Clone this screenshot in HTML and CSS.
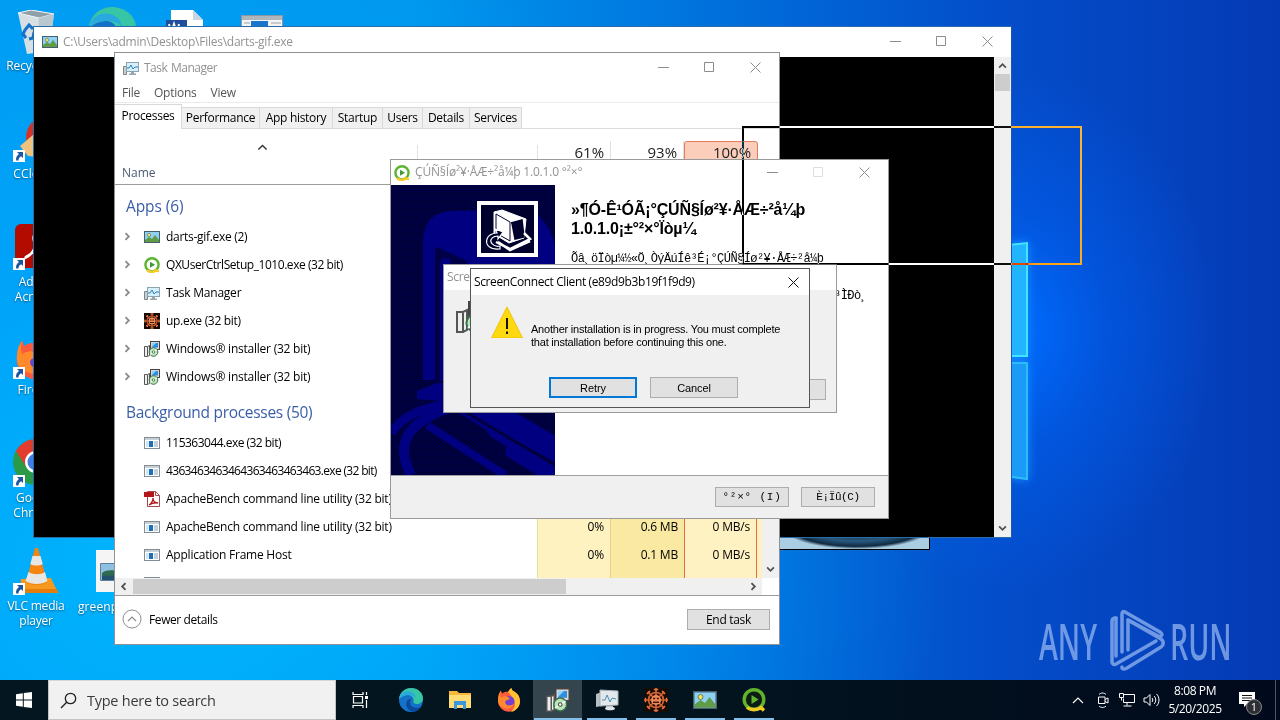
FILE: index.html
```html
<!DOCTYPE html>
<html lang="en">
<head>
    <meta charset="UTF-8">
    <meta name="viewport" content="width=device-width, initial-scale=1.0">
    <title>Desktop</title>
    <link rel="stylesheet" href="styles.css">
</head>
<body>
    <!-- Shared icons -->
    <svg class="defs" width="0" height="0">
        <symbol id="i-picture" viewBox="0 0 16 12">
            <rect x=".5" y=".5" width="15" height="11" fill="#8fd0f5" stroke="#45606c"/>
            <path d="M1 11V9l4-3 3 2 3-4 4 5v2z" fill="#5f9c45"/>
            <circle cx="5" cy="4" r="1.7" fill="#f2df5a" stroke="#5b7a50" stroke-width=".6"/>
        </symbol>
        <symbol id="i-qx" viewBox="0 0 16 16">
            <circle cx="8" cy="7.8" r="6.6" fill="#fff" stroke="#5cb531" stroke-width="2.4"/>
            <path d="M3 13.2a6.6 6.6 0 0 0 9 0l3 1.3" fill="none" stroke="#f5c927" stroke-width="2.4"/>
            <path d="M6 4.8v6l5-3z" fill="#3f9a35"/>
        </symbol>
        <symbol id="i-taskmgr" viewBox="0 0 16 16">
            <path d="M.5 6.500h3v8h-3z" fill="#c9ced2" stroke="#7d868c"/>
            <rect x="3.500" y="2.500" width="12" height="9" fill="#d5effc" stroke="#8ba3b1"/>
            <path d="M4 8h2l2-3 2 4 2-2h3" fill="none" stroke="#2f7fb5"/>
            <path d="M8 12h3v1.500h2V15H6v-1.500h2z" fill="#9aa6ae"/>
        </symbol>
        <symbol id="i-up" viewBox="0 0 16 16">
            <rect width="16" height="16" fill="#170b06"/>
            <g stroke="#d9622e" stroke-width="1.100" fill="none">
                <path d="M8 0v16M0 8h16M2.500 2.500l11 11M13.500 2.500l-11 11"/>
                <circle cx="8" cy="8" r="5"/>
            </g>
            <circle cx="8" cy="8" r="3.400" fill="#e98b58"/>
            <path d="M6 7h1.500M8.500 7H10M6 9.500h4" stroke="#4a1708"/>
            <path d="M6.500 1h3M6.500 15h3M1 6.500v3M15 6.500v3M2 4l2-2M12 2l2 2M2 12l2 2M12 14l2-2" stroke="#e27a45"/>
        </symbol>
        <symbol id="i-installer" viewBox="0 0 16 16">
            <rect x="6.500" y=".5" width="9" height="8" fill="#d6d6d6" stroke="#444"/>
            <rect x="8" y="2" width="6" height="4.500" fill="#2e8ee0"/>
            <path d="M8 6l4-4H8z" fill="#8fd2fb"/>
            <path d="M.5 5.500h3l2-1v10l-2 1h-3z" fill="#eee" stroke="#555"/>
            <path d="M3.500 6v9" stroke="#555"/>
            <circle cx="9.500" cy="11" r="4.300" fill="#b9e8b4" stroke="#3d6b53"/>
            <path d="M9.500 11L13 8.700M9.500 11L6 13.500" stroke="#fff"/>
            <circle cx="9.500" cy="11" r="1.200" fill="#fff" stroke="#444" stroke-width=".7"/>
        </symbol>
        <symbol id="i-exe" viewBox="0 0 16 12">
            <rect x=".5" y=".5" width="15" height="11" fill="#fff" stroke="#848c94"/>
            <path d="M1 1h14v2H1z" fill="#c6d0d8"/>
            <path d="M2 4h2.500v6H2z" fill="#cfe6f4"/>
            <path d="M5 4h4v6H5z" fill="#1c6fb8"/>
            <path d="M10 5h4M10 7h4M10 9h4" stroke="#8aa4b8"/>
        </symbol>
        <symbol id="i-pdf" viewBox="0 0 16 16">
            <path d="M3.500.5h8l4 4v11h-12z" fill="#fff" stroke="#a5494d"/>
            <path d="M11.500.5v4h4" fill="none" stroke="#a5494d"/>
            <path d="M0 1h10v5H0z" fill="#b3151b"/>
            <path d="M5 14c3-2 4-5 4-7 0 3 2 5 5 5-3-.5-6 0-9 2z" fill="none" stroke="#b3151b" stroke-width="1.300"/>
        </symbol>
        <symbol id="i-min" viewBox="0 0 11 11"><path d="M0 5.500h11" stroke="currentColor"/></symbol>
        <symbol id="i-max" viewBox="0 0 11 11"><path d="M.5.5h9v9H.5z" fill="none" stroke="currentColor"/></symbol>
        <symbol id="i-close" viewBox="0 0 11 11"><path d="M.5.5l10 10M10.500.5l-10 10" stroke="currentColor"/></symbol>
        <symbol id="i-chev" viewBox="0 0 8 8"><path d="M1 5.800l3-3 3 3" fill="none" stroke="currentColor" stroke-width="1.600"/></symbol>
        <symbol id="i-chev-thin" viewBox="0 0 8 8"><path d="M1 5.500l3-3 3 3" fill="none" stroke="currentColor"/></symbol>
        <symbol id="i-shortcut" viewBox="0 0 12 12">
            <path d="M0 0h12v12H0z" fill="#fff"/>
            <path d="M4 2h6v6L8 6.200C6 7.500 5.500 8.500 5.500 10.500H3.200C2.500 7.500 4 5.500 6 4z" fill="#1d559e"/>
        </symbol>
        <symbol id="i-edge" viewBox="0 0 24 24">
            <circle cx="12" cy="12" r="12" fill="#1373ca"/>
            <path d="M0 11C1 4 6 0 12 0c7 0 12 5 12 10 0 4-3 6-6.500 6-2 0-3.500-1-3-2.500C15.500 10 12.500 7 9 7c-4 0-7 2-9 4z" fill="#37c6a5"/>
            <path d="M0 11C2 4 7 2.500 11 3.500c4 1 6 4 6 7-1-2.500-4-3.500-7-3.500-4 0-8 1-10 4z" fill="#2aa9e0"/>
            <path d="M22 18.500c-3 2-8 1.500-10-1-1.500-2-1-5 .5-6.500-4-.5-6 3-5 7 1 3.500 4 5.500 7 5.500 3 0 6-2 7.500-5z" fill="#0c4a9c"/>
        </symbol>
        <symbol id="i-firefox" viewBox="0 0 24 24">
            <path d="M1 13C1 8 2 5 4 2.500l1 3C7 4 9 3.500 11 4c1-2 2-3 3.500-4 0 2 1.500 3 3.500 4 3 2 5 5 5 9.500A11 10.500 0 0 1 1 13z" fill="#ff5a3c"/>
            <path d="M11 4c1-2 2-3 3.500-4 0 2 1.500 3 3.500 4 3 2 5 5 5 9.500 0 5-4 9.500-9 10.500 4-4 5-9 2-13-1-3-3-5-5-7z" fill="#ffc233"/>
            <circle cx="12" cy="13.500" r="5.500" fill="#7540cf"/>
            <path d="M4 2.500C3 6 3 8 4 10c2-2 5-2 7-1l2 2-4 1.500c-2 2 0 5 3 5 2 0 4-1 5-2-1 4-5 5.500-8 5C4 19.500 1 16 1 13 1 8 2 5 4 2.500z" fill="#ff8a2c"/>
        </symbol>
    </svg>

    <div class="desktop">
        <svg class="wall-logo" viewBox="0 0 40 250">
            <path d="M0 7l28-3v113H0z" fill="#22b4ff" stroke="#41e4fb" stroke-width="2"/>
            <path d="M0 124h28v116l-28-4z" fill="#1a9bf8" stroke="#2cbdf9" stroke-width="2"/>
        </svg>

        <!-- Desktop shortcuts -->
        <div class="shortcut recycle">
            <svg width="40" height="44" viewBox="0 0 40 44">
                <path d="M1 3l13-3 23 4-5 37-22 3z" fill="#d5dfe4"/>
                <path d="M1 3l13-3 23 4-15 4z" fill="#919fa7" stroke="#f0f6f8"/>
                <path d="M22 8l15-4-5 37-12 2z" fill="#b9c7ce"/>
                <g fill="none" stroke="#1672c8" stroke-width="3"><path d="M8 20l4-5 4 4M17 22l-1 6-4 1M9 28l-3-4 2-4"/></g>
            </svg>
            <span>Recycle Bin</span>
        </div>
        <div class="shortcut ccleaner">
            <svg width="44" height="50" viewBox="0 0 44 50">
                <circle cx="30" cy="25" r="21" fill="#d3322b"/><circle cx="30" cy="25" r="12" fill="#4c8ed0"/>
                <path d="M3 34l14-12 14 8v16l-20-2z" fill="#efc37e"/>
            </svg>
            <svg class="arrow"><use href="#i-shortcut"/></svg>
            <span>CCleaner</span>
        </div>
        <div class="shortcut acrobat">
            <svg width="44" height="44" viewBox="0 0 44 44">
                <rect width="44" height="44" rx="6" fill="#b30b00"/>
                <path d="M10 34c8-3 13-14 11-22-2-3-3 1-2 5 2 6 8 10 14 10-6-2-16 0-23 7z" fill="none" stroke="#fff" stroke-width="2.500"/>
            </svg>
            <svg class="arrow"><use href="#i-shortcut"/></svg>
            <span>Adobe<br>Acrobat</span>
        </div>
        <div class="shortcut firefox">
            <svg width="44" height="44"><use href="#i-firefox"/></svg>
            <svg class="arrow"><use href="#i-shortcut"/></svg>
            <span>Firefox</span>
        </div>
        <div class="shortcut chrome">
            <svg width="46" height="46" viewBox="0 0 46 46">
                <circle cx="23" cy="23" r="23" fill="#2b9a48"/>
                <path d="M3 12C7 5 14 0 23 0s16 5 20 12H23z" fill="#e33b2e"/><path d="M3 12l11 17 9-17z" fill="#e33b2e"/>
                <circle cx="23" cy="23" r="11" fill="#fff"/><circle cx="23" cy="23" r="8.500" fill="#3f7ee8"/>
            </svg>
            <svg class="arrow"><use href="#i-shortcut"/></svg>
            <span>Google<br>Chrome</span>
        </div>
        <div class="shortcut vlc">
            <svg width="44" height="48" viewBox="0 0 44 48">
                <path d="M7 32l30-1 7 15H6z" fill="#f59a1f"/>
                <path d="M6 42h37l1 4H4z" fill="#e87c0c"/>
                <path d="M21 1h3l9 34c-5 4-16 4-21 0z" fill="#f58410"/>
                <path d="M18.500 9h8l2.300 8c-4 2-9 2-12.500 0zM14.500 25c5 3 12 3 16.500 0l2.500 9c-6 4-16 4-22 0z" fill="#e6e6e4"/>
            </svg>
            <svg class="arrow"><use href="#i-shortcut"/></svg>
            <span>VLC media<br>player</span>
        </div>
        <div class="shortcut edge"><svg width="48" height="48"><use href="#i-edge"/></svg></div>
        <div class="shortcut worddoc">
            <svg width="38" height="40" viewBox="0 0 38 40">
                <path d="M5 1h22l10 10v28H5z" fill="#fff"/><path d="M27 1l10 10H27z" fill="#c9d6e2"/>
                <path d="M0 11h21v20H0z" fill="#1f4f9c"/><path d="M3 15l2 9 3-9 3 9 2-9" fill="none" stroke="#fff" stroke-width="2"/>
            </svg>
        </div>
        <div class="shortcut exefile">
            <svg width="42" height="30" viewBox="0 0 42 30">
                <path d="M.5.5h41v29H.5z" fill="#f4f4f4" stroke="#8e979f"/><path d="M1 1h40v4H1z" fill="#aeb6bc"/>
                <path d="M10 6h17v20H10z" fill="#1976cc"/><path d="M30 8h10M30 12h10M3 8h6" stroke="#9aa3aa"/>
            </svg>
        </div>
        <div class="shortcut greenp">
            <svg width="42" height="42" viewBox="0 0 42 42">
                <path d="M0 0h42v42H0z" fill="#f5f5f5"/><path d="M4.500 13.500h34v17h-34z" fill="#8fc0e4" stroke="#5d7f9c"/>
                <path d="M6 23c6-5 14-2 30 0v6H6z" fill="#2f6a4e"/><path d="M6 26c6-1 10 0 30 0v4H6z" fill="#26506f"/>
            </svg>
            <span>greenp...</span>
        </div>

        <div class="peek"></div>

        <!-- Console window -->
        <div class="window console">
            <div class="titlebar">
                <svg class="pic"><use href="#i-picture"/></svg>
                <span class="title">C:\Users\admin\Desktop\Files\darts-gif.exe</span>
                <div class="controls">
                    <svg><use href="#i-min"/></svg><svg><use href="#i-max"/></svg><svg><use href="#i-close"/></svg>
                </div>
            </div>
            <div class="console-body">
                <div class="vscroll">
                    <svg><use href="#i-chev"/></svg>
                    <div class="thumb"></div>
                    <svg class="down"><use href="#i-chev"/></svg>
                </div>
            </div>
        </div>

        <!-- Task Manager -->
        <div class="window taskmgr">
            <div class="titlebar">
                <svg class="sq"><use href="#i-taskmgr"/></svg>
                <span class="title">Task Manager</span>
                <div class="controls">
                    <svg><use href="#i-min"/></svg><svg><use href="#i-max"/></svg><svg><use href="#i-close"/></svg>
                </div>
            </div>
            <div class="menu"><span>File</span><span>Options</span><span>View</span></div>
            <div class="tabs">
                <span class="tab active">Processes</span>
                <span class="tab t-perf">Performance</span>
                <span class="tab t-hist">App history</span>
                <span class="tab t-start">Startup</span>
                <span class="tab t-users">Users</span>
                <span class="tab t-det">Details</span>
                <span class="tab t-serv">Services</span>
            </div>
            <div class="thead">
                <div class="th-name"><svg><use href="#i-chev-thin"/></svg><span>Name</span></div>
                <div class="th"></div>
                <div class="th">61%</div>
                <div class="th">93%</div>
                <div class="th hot">100%</div>
            </div>
            <div class="table">
                <div class="list">
                    <h2>Apps (6)</h2>
                    <div class="row"><svg class="exp"><use href="#i-chev"/></svg><svg class="ico"><use href="#i-picture"/></svg><span>darts-gif.exe (2)</span></div>
                    <div class="row"><svg class="exp"><use href="#i-chev"/></svg><svg class="ico"><use href="#i-qx"/></svg><span class="tight">QXUserCtrlSetup_1010.exe (32 bit)</span></div>
                    <div class="row"><svg class="exp"><use href="#i-chev"/></svg><svg class="ico"><use href="#i-taskmgr"/></svg><span class="wide">Task Manager</span></div>
                    <div class="row"><svg class="exp"><use href="#i-chev"/></svg><svg class="ico"><use href="#i-up"/></svg><span>up.exe (32 bit)</span></div>
                    <div class="row"><svg class="exp"><use href="#i-chev"/></svg><svg class="ico"><use href="#i-installer"/></svg><span class="wide">Windows® installer (32 bit)</span></div>
                    <div class="row"><svg class="exp"><use href="#i-chev"/></svg><svg class="ico"><use href="#i-installer"/></svg><span class="wide">Windows® installer (32 bit)</span></div>
                    <h2>Background processes (50)</h2>
                    <div class="row sub"><svg class="ico"><use href="#i-exe"/></svg><span class="num">115363044.exe (32 bit)</span></div>
                    <div class="row sub"><svg class="ico"><use href="#i-exe"/></svg><span class="digits">4363463463464363463463463.exe (32 bit)</span></div>
                    <div class="row sub"><svg class="ico"><use href="#i-pdf"/></svg><span class="wide">ApacheBench command line utility (32 bit)</span></div>
                    <div class="row sub"><svg class="ico"><use href="#i-exe"/></svg><span class="wide">ApacheBench command line utility (32 bit)</span></div>
                    <div class="row sub"><svg class="ico"><use href="#i-exe"/></svg><span class="wide">Application Frame Host</span></div>
                    <div class="row sub"><svg class="ico"><use href="#i-exe"/></svg></div>
                </div>
                <div class="col cpu"><span>0%</span><span>0%</span></div>
                <div class="col mem"><span>0.6 MB</span><span>0.1 MB</span></div>
                <div class="col disk"><span>0 MB/s</span><span>0 MB/s</span></div>
                <div class="col rest"></div>
                <div class="vscroll"><svg class="down"><use href="#i-chev"/></svg></div>
            </div>
            <div class="hscroll">
                <svg class="left"><use href="#i-chev"/></svg>
                <div class="thumb"></div>
                <svg class="right"><use href="#i-chev"/></svg>
            </div>
            <div class="foot">
                <svg viewBox="0 0 20 20"><circle cx="10" cy="10" r="9" fill="none" stroke="#8f8f8f"/><path d="M6 12l4-4 4 4" fill="none" stroke="#8f8f8f" stroke-width="1.200"/></svg>
                <span>Fewer details</span>
                <div class="btn end">End task</div>
            </div>
        </div>

        <!-- Setup wizard -->
        <div class="window wizard">
            <div class="titlebar">
                <svg class="sq"><use href="#i-qx"/></svg>
                <span class="title">ÇÚÑ§Íø²¥·ÅÆ÷²å¼þ 1.0.1.0 °²×°</span>
                <div class="controls">
                    <svg><use href="#i-min"/></svg><svg class="off"><use href="#i-max"/></svg><svg><use href="#i-close"/></svg>
                </div>
            </div>
            <div class="wiz-body">
                <svg class="banner" viewBox="0 0 164 290">
                    <defs>
                        <pattern id="dots" width="4" height="4" patternUnits="userSpaceOnUse">
                            <path d="M0 0h4v4H0z" fill="#000038"/><path d="M0 0h1v1H0zM2 2h1v1H2z" fill="#00006c"/>
                        </pattern>
                    </defs>
                    <path d="M0 0h164v290H0z" fill="url(#dots)"/>
                    <path d="M32 60c0-22 8-32 28-34l80-2c12 8 24 26 24 40v60H60V72L44 62v133H32z" fill="#000080"/>
                    <path d="M46 62l30 14v120H46z" fill="#000048"/>
                    <path d="M49 80c0-6 4-8 10-6v122H49z" fill="#000080"/>
                    <path d="M26 206l20-8h30v20l-50-4z" fill="#000080"/>
                    <g fill="none" stroke="#000080" stroke-width="9">
                        <path d="M0 248c14-20 34-25 60-30"/>
                        <path d="M20 290C2 256 20 236 58 223" stroke-width="10"/>
                        <path d="M36 240l78 50" stroke-width="8"/>
                        <path d="M60 218l104 64"/>
                    </g>
                    <path d="M78 222h42l44 26v42l-64-38z" fill="#000080"/>
                    <path d="M66 222l98 58M118 222l46 27M116 252l48 27" stroke="#000040" stroke-width="3"/>
                    <path d="M116 256l10 4 38 22v8h-18l-32-20z" fill="#000080"/>
                    <path d="M86 16h61v56H86z" fill="#fff"/>
                    <path d="M90 20h53v48H90z" fill="#00002c"/>
                    <path d="M103 27l8-2 24 9-2 19-15 5-15-9z" fill="#fff" stroke="#fff"/>
                    <path d="M120 38l11-3 2 17-9 2-3-16" fill="#00002c" stroke="#00002c" stroke-width="1.500"/>
                    <path d="M105 29v19l14 8V37z" fill="#fff" stroke="#00002c"/>
                    <path d="M133 48l6 6-20 10-14-7M107 57l12 8 20-9" fill="none" stroke="#fff" stroke-width="2.500"/>
                    <path d="M109 64c-10 1-15-4-13-10 1-4 6-6 10-6l-2-4 8 3-5 7v-3c-5 0-8 3-7 6 1 3 5 5 9 4z" fill="#00002c" stroke="#fff" stroke-width="1.200"/>
                </svg>
                <div class="wiz-text">
                    <h1>»¶Ó-Ê¹ÓÃ¡°ÇÚÑ§Íø²¥·ÅÆ÷²å¼þ<br>1.0.1.0¡±°²×°Ïòµ¼</h1>
                    <p>Õâ¸öÏòµ¼½«Ö¸ÒýÄúÍê³É¡°ÇÚÑ§Íø²¥·ÅÆ÷²å¼þ</p>
                    <p class="second">³ÌÐò¸</p>
                </div>
            </div>
            <div class="wiz-foot">
                <div class="btn install">°²×°&nbsp;(I)</div>
                <div class="btn">È¡Ïû(C)</div>
            </div>
        </div>

        <!-- Installer progress dialog, behind the message box -->
        <div class="window progress">
            <div class="titlebar"><span class="title">Scre</span></div>
            <div class="progress-body">
                <svg><use href="#i-installer"/></svg>
                <div class="btn"></div>
            </div>
        </div>

        <!-- Message box -->
        <div class="window msgbox">
            <div class="titlebar">
                <span class="title">ScreenConnect Client (e89d9b3b19f1f9d9)</span>
                <div class="controls"><svg><use href="#i-close"/></svg></div>
            </div>
            <div class="msg-body">
                <svg viewBox="0 0 32 32">
                    <path d="M16 1l15.500 31H.5z" fill="#ffd90f" stroke="#efc200" stroke-linejoin="round"/>
                    <path d="M16 12v11M16 25.500v2.500" stroke="#111" stroke-width="2"/>
                </svg>
                <p>Another installation is in progress. You must complete<br>that installation before continuing this one.</p>
            </div>
            <div class="msg-foot"><div class="btn default">Retry</div><div class="btn">Cancel</div></div>
        </div>

        <!-- Outline drawn while a window is dragged -->
        <div class="drag-outline"></div>

        <div class="watermark">
            <span class="any">ANY</span>
            <svg viewBox="0 0 56 62">
                <g fill="none" stroke="#9cbdf3" stroke-width="3.500" stroke-linejoin="round" stroke-linecap="round">
                    <path d="M7 8c-3 0-4 1-4 3v41c0 2 2 3 4 2l40-23"/>
                    <path d="M7 8v38M13 42V4c0-2 1-3 3-2l35 20c3 2 2 4 0 5L19 10"/>
                    <path d="M13 57v1c1 2 3 1 5 0l34-21c3-2 3-6 0-8L19 10v30"/>
                </g>
            </svg>
            <span class="run">RUN</span>
        </div>
    </div>

    <!-- Taskbar -->
    <div class="taskbar">
        <div class="start"><svg width="16" height="16" viewBox="0 0 16 16"><path d="M0 2.200L6.800 1.200V7.500H0zM7.800 1L16 0v7.500H7.800zM0 8.500h6.800v6.300L0 13.800zM7.800 8.500H16V16l-8.200-1.100z" fill="#fff"/></svg></div>
        <div class="search">
            <svg width="17" height="17" viewBox="0 0 17 17"><circle cx="10.500" cy="6.500" r="5.200" fill="none" stroke="#222" stroke-width="1.300"/><path d="M6.700 10.300L1 16" stroke="#222" stroke-width="1.400"/></svg>
            <span>Type here to search</span>
        </div>
        <div class="task"><svg width="17" height="16" viewBox="0 0 17 16"><path d="M1 0v2.500h10V0M1 16v-2.500h10V16M1.500 4.500h9v6.500h-9zM14.500 0v3M14.500 8v8" fill="none" stroke="#fff" stroke-width="1.200"/><path d="M13 4h3v3h-3z" fill="#fff"/></svg></div>
        <div class="task"><svg width="24" height="24"><use href="#i-edge"/></svg></div>
        <div class="task">
            <svg width="22" height="20" viewBox="0 0 22 20"><path d="M0 1h8l2 2h12v15H0z" fill="#f5b83a"/><path d="M0 5h22v13H0z" fill="#ffdc74"/><path d="M5 11h12v8h-3v-4H8v4H5z" fill="#3d98da"/></svg>
        </div>
        <div class="task"><svg width="24" height="24"><use href="#i-firefox"/></svg></div>
        <div class="task open current"><svg width="24" height="24"><use href="#i-installer"/></svg></div>
        <div class="task open">
            <svg width="24" height="22" viewBox="0 0 24 22"><path d="M1 5l6-2v14l-6 1z" fill="#b7bec4"/><path d="M5 1l18 1v14L5 17z" fill="#e3e8eb" stroke="#a5afb6"/><path d="M7 11h3l2-5 3 7 2-4 4 1" fill="none" stroke="#4a8eb8"/><path d="M11 17h7v2h-7z" fill="#b9c2c8"/><ellipse cx="15" cy="19.500" rx="5" ry="1.800" fill="#dfe5e8"/></svg>
        </div>
        <div class="task open"><svg width="24" height="24"><use href="#i-up"/></svg></div>
        <div class="task open"><svg width="24" height="18"><use href="#i-picture"/></svg></div>
        <div class="task open">
            <svg width="24" height="24" viewBox="0 0 24 24"><circle cx="12" cy="11.500" r="9.800" fill="#0b1d14" stroke="#62b32c" stroke-width="3.400"/><path d="M5 19.500c4 3 10 3 14 0l3 3" fill="none" stroke="#f0cb20" stroke-width="3.400"/><path d="M9.500 7v9l7-4.500z" fill="#62b32c"/></svg>
        </div>
        <div class="tray">
            <svg width="12" height="8" viewBox="0 0 12 8"><path d="M1 7l5-5 5 5" fill="none" stroke="#fff" stroke-width="1.200"/></svg>
            <svg width="12" height="16" viewBox="0 0 12 16"><path d="M1.500 5h6.500v6.500H1.500zM8 7.500l3-1.500v5L8 9.500M2 2.500c2-2 5-2 7 0M2 14c2 2 5 2 7 0" fill="none" stroke="#fff"/></svg>
            <svg width="16" height="14" viewBox="0 0 16 14"><path d="M5 1.500h10.500v8H4.500v-4M8 9.500v3M4.500 13h8M.5.5h4v4h-4zM2.500 4.500v3" fill="none" stroke="#fff"/></svg>
            <svg width="17" height="14" viewBox="0 0 17 14"><path d="M1 5h2.500L7 1.500v11L3.500 9H1zM9 5c1 1 1 3 0 4M11 3c2.300 2 2.300 6 0 8M13.500 1c3.300 3 3.300 9 0 12" fill="none" stroke="#fff"/></svg>
        </div>
        <div class="clock"><span>8:08 PM</span><span>5/20/2025</span></div>
        <div class="notify">
            <svg width="16" height="16" viewBox="0 0 16 16"><path d="M0 0h16v12H8l-3 3v-3H0z" fill="#fff"/><path d="M3 3.500h10M3 6h10M3 8.500h10" stroke="#111"/></svg>
            <span class="badge">1</span>
        </div>
        <div class="peek-btn"></div>
    </div>
</body>
</html>
```
FILE: styles.css
```css
* { box-sizing: border-box; }
body { margin: 0; width: 1280px; height: 720px; overflow: hidden; font-family: "Open Sans", "Noto Sans", sans-serif; font-size: 12px; color: #000; }
svg { display: block; flex: none; }
.defs { position: absolute; }

/* Wallpaper */
.desktop {
    position: relative; width: 1280px; height: 680px; overflow: hidden;
    background:
        radial-gradient(ellipse 210px 260px at 1010px 330px, #006cff 0%, rgba(0, 98, 245, .5) 45%, rgba(0, 90, 230, 0) 100%),
        radial-gradient(ellipse 760px 620px at 180px 560px, rgba(0, 184, 255, .9) 0%, rgba(0, 170, 255, .5) 50%, rgba(0, 160, 255, 0) 100%),
        linear-gradient(90deg, #009cf2 0%, #0098ee 32%, #0068d8 61%, #044dca 78%, #053ab4 100%);
}
.wall-logo { position: absolute; left: 999px; top: 239px; width: 40px; height: 250px; filter: drop-shadow(0 0 5px #1590ff); }

/* Shortcuts */
.shortcut { position: absolute; width: 74px; display: flex; flex-direction: column; align-items: center; color: #fff; text-align: center; line-height: 15px; letter-spacing: .1px; text-shadow: 0 1px 2px rgba(0, 0, 0, .5); }
.shortcut .arrow { position: absolute; left: 13px; width: 12px; height: 12px; }
.shortcut span { margin-top: 6px; }
.recycle { left: 0; top: 10px; }
.recycle span { margin-top: 4px; letter-spacing: -.1px; }
.ccleaner { left: 2px; top: 112px; }
.ccleaner .arrow { left: 11px; top: 38px; }
.ccleaner span { margin-top: 4px; }
.acrobat { left: 0; top: 224px; }
.acrobat .arrow { top: 34px; }
.acrobat span { margin-top: 6px; }
.firefox { left: 0; top: 336px; }
.firefox .arrow { top: 31px; }
.firefox span { margin-top: 2px; }
.chrome { left: -1px; top: 439px; }
.chrome .arrow { top: 36px; left: 14px; }
.chrome span { margin-top: 5px; }
.vlc { left: -1px; top: 547px; }
.vlc .arrow { left: 14px; top: 36px; }
.vlc span { margin-top: 3px; white-space: nowrap; letter-spacing: -.2px; }
.shortcut.edge { left: 75px; top: 7px; }
.worddoc { left: 148px; top: 9px; }
.exefile { left: 225px; top: 15px; }
.greenp { left: 78px; top: 550px; align-items: flex-start; }
.greenp svg { margin-left: 18px; }
.greenp span { margin-top: 7px; }
.peek { position: absolute; left: 760px; top: 520px; width: 170px; height: 30px; border: 1px solid #000; background: radial-gradient(ellipse 75px 22px at 96px 6px, #0d1d2c 0%, #28587e 65%, #102a42 88%, #a9cde2 100%); }

/* Windows */
.window { position: absolute; display: flex; flex-direction: column; background: #fff; border: 1px solid #9a9a9a; }
.titlebar { display: flex; align-items: center; flex: none; color: #929292; background: #fff; white-space: nowrap; }
.title { position: relative; top: -1px; }
.controls { display: flex; gap: 35px; margin-left: auto; }
.controls svg { width: 11px; height: 11px; color: #8c8c8c; }
.controls .off { color: #dedede; }
.sq { width: 16px; height: 16px; }
.btn { display: flex; align-items: center; justify-content: center; background: #e1e1e1; border: 1px solid #adadad; }
.vscroll { width: 17px; background: #f0f0f0; display: flex; flex-direction: column; align-items: center; color: #505050; }
.vscroll svg { width: 9px; height: 9px; }
.down { transform: rotate(180deg); margin-top: auto; }

.console { left: 33px; top: 26px; width: 979px; height: 512px; border-color: #2b6ca8; border-right-color: #1b58a8; }
.console .titlebar { height: 30px; padding: 0 18px 1px 8px; }
.console .title { top: 0; margin-left: 5px; letter-spacing: -.25px; }
.pic { width: 16px; height: 12px; }
.console-body { flex: 1; background: #000; display: flex; justify-content: flex-end; }
.console-body .vscroll { padding: 4px 0; }
.console-body .thumb { width: 15px; height: 17px; margin-top: 4px; background: #cdcdcd; }

.taskmgr { left: 114px; top: 52px; width: 666px; height: 593px; border-color: #8d9297; }
.taskmgr .titlebar { height: 30px; padding: 0 18px 1px 8px; }
.taskmgr .title { top: 0; margin-left: 5px; letter-spacing: -.5px; word-spacing: 1px; }
.menu { height: 20px; flex: none; display: flex; gap: 14px; padding: 1px 7px 0; line-height: 18px; letter-spacing: -.25px; color: #555; border-bottom: 1px solid #ececec; }
.tabs { height: 26px; flex: none; display: flex; align-items: flex-end; background: linear-gradient(#dcdcdc, #dcdcdc) bottom / 100% 1px no-repeat; letter-spacing: -.3px; }
.tab { height: 22px; line-height: 20px; border: 1px solid #d9d9d9; border-left: 0; background: #f0f0f0; text-align: center; white-space: nowrap; }
.tab.active { width: 67px; height: 25px; line-height: 22px; background: #fff; border-bottom: 0; }
.t-perf { width: 78px; }
.t-hist { width: 73px; }
.t-start { width: 50px; }
.t-users { width: 40px; }
.t-det { width: 47px; }
.t-serv { width: 52px; }

.thead { height: 56px; flex: none; display: flex; align-items: flex-end; border-bottom: 1px solid #9c9c9c; }
.th-name { width: 303px; height: 39px; padding: 0 7px; color: #4c5a74; border-right: 1px solid #e0e0e0; display: flex; flex-direction: column; justify-content: space-between; }
.th-name svg { width: 11px; height: 11px; margin: -3px 0 0 135px; color: #333; }
.th-name span { line-height: 23px; }
.th { width: 73px; height: 43px; padding: 0 6px; line-height: 22px; border-right: 1px solid #e0e0e0; text-align: right; font-size: 15px; letter-spacing: -.05px; color: #222; }
.th:nth-child(2) { width: 120px; height: 39px; }
.th:nth-child(4) { width: 73px; }
.th.hot { width: 74px; background: #fbcdbb; border: 1px solid #e37b5c; border-radius: 3px 3px 0 0; line-height: 20px; }

.table { flex: 1; min-height: 0; display: flex; overflow: hidden; }
.list { width: 422px; overflow: hidden; letter-spacing: -.3px; }
.list h2 { height: 38px; margin: 0; padding: 5px 0 0 11px; font-size: 15.500px; font-weight: 400; line-height: 32px; color: #3a5fa8; letter-spacing: -.3px; }
.list h2:first-child { letter-spacing: -.1px; }
.row { height: 28px; display: flex; align-items: center; padding: 0 0 1px 8px; white-space: nowrap; }
.row.sub { padding-left: 29px; }
.row .tight { letter-spacing: -.45px; }
.row .num { letter-spacing: -.52px; }
.row .digits { letter-spacing: -.67px; }
.row .wide { letter-spacing: -.23px; }
.exp { width: 9px; height: 9px; transform: rotate(90deg); color: #8b8b8b; margin-right: 12px; }
.ico { width: 16px; height: 16px; margin-right: 6px; }
.col { display: flex; flex-direction: column; flex: none; align-items: flex-end; padding: 328px 6px 0 0; line-height: 28px; letter-spacing: -.2px; }
.cpu { width: 73px; background: #fef2c1; border-left: 1px solid #e9dca6; }
.mem { width: 74px; background: #f9e9a2; border-left: 1px solid #e3d288; }
.disk { width: 73px; background: #fff2c2; border-left: 1px solid #e5694a; border-right: 1px solid #e5694a; }
.rest { width: 5px; padding: 0; background: #fff2c2; }
.table .vscroll { margin-left: auto; padding-bottom: 4px; }
.hscroll { height: 17px; width: 647px; flex: none; display: flex; align-items: center; background: #f0f0f0; color: #505050; padding: 0 4px; }
.hscroll svg { width: 9px; height: 9px; }
.hscroll .thumb { width: 433px; height: 15px; margin-left: 5px; background: #cdcdcd; }
.left { transform: rotate(-90deg); }
.right { transform: rotate(90deg); margin-left: auto; }
.foot { height: 49px; flex: none; display: flex; align-items: center; padding: 0 9px 2px 7px; border-top: 1px solid #9c9c9c; letter-spacing: -.4px; }
.foot svg { width: 20px; height: 20px; }
.foot span { margin-left: 7px; }
.end { width: 83px; height: 21px; margin-left: auto; letter-spacing: -.3px; }

.wizard { left: 390px; top: 159px; width: 499px; height: 360px; }
.wizard .titlebar { height: 25px; padding: 0 18px 0 3px; }
.wizard .title { margin-left: 5px; letter-spacing: -.18px; }
.wiz-body { height: 290px; flex: none; display: flex; }
.banner { width: 164px; height: 290px; }
.wiz-text { flex: 1; padding: 15px 0 0 16px; white-space: nowrap; }
.wiz-text h1 { margin: 0; font: bold 16px/19px "Liberation Sans", Arial, sans-serif; letter-spacing: -.16px; }
.wiz-text p { margin: 12px 0 0; font: 12px/18px "Liberation Mono", monospace; letter-spacing: -.56px; }
.wiz-text .second { margin: 19px 0 0 263px; }
.wiz-foot { flex: 1; display: flex; gap: 12px; justify-content: flex-end; padding: 11px 13px 0 0; background: #f0f0f0; border-top: 1px solid #a0a0a0; }
.wiz-foot .btn { width: 74px; height: 20px; font: 11px "Liberation Mono", monospace; letter-spacing: -.4px; }
.wiz-foot .install { letter-spacing: .8px; }

.progress { left: 443px; top: 264px; width: 394px; height: 149px; }
.progress .titlebar { height: 25px; padding-left: 3px; }
.progress .title { letter-spacing: -.3px; }
.progress-body { flex: 1; display: flex; justify-content: space-between; background: #f0f0f0; padding: 11px 10px 0 12px; }
.progress-body svg { width: 32px; height: 32px; }
.progress-body .btn { width: 75px; height: 21px; margin-top: 78px; }

.msgbox { left: 470px; top: 268px; width: 340px; height: 140px; border-color: #555; }
.msgbox .titlebar { height: 26px; padding: 0 10px 0 3px; color: #000; }
.msgbox .title { letter-spacing: -.38px; }
.msgbox .controls svg { color: #111; }
.msg-body { height: 81px; display: flex; gap: 8px; padding: 11px 0 0 20px; background: #f0f0f0; }
.msg-body svg { width: 32px; height: 32px; }
.msg-body p { margin: 17px 0 0; font: 11px/13px "Liberation Sans", Arial, sans-serif; white-space: nowrap; letter-spacing: -.22px; }
.msg-foot { flex: 1; display: flex; gap: 13px; padding: 1px 0 0 78px; background: #f0f0f0; }
.msg-foot .btn { width: 88px; height: 21px; font: 11px "Liberation Sans", Arial, sans-serif; letter-spacing: -.1px; }
.msg-foot .default { border: 2px solid #0078d7; }

.drag-outline { position: absolute; left: 742px; top: 126px; width: 340px; height: 139px; border: 2px solid #fff; mix-blend-mode: difference; }

.watermark { position: absolute; left: 1039px; top: 610px; display: flex; align-items: center; opacity: .7; color: #9cbdf3; font: 600 50px/62px "Open Sans", sans-serif; }
.watermark svg { width: 56px; height: 62px; margin: 0 5px 0 7px; }
.watermark span { width: 63px; white-space: nowrap; transform: scaleX(.57); transform-origin: 0 50%; }

/* Taskbar */
.taskbar { height: 40px; display: flex; align-items: stretch; background: linear-gradient(90deg, #04161f 0%, #03141f 55%, #010a1c 100%); color: #fff; }
.start { width: 48px; display: flex; align-items: center; justify-content: center; }
.search { width: 288px; display: flex; align-items: center; padding-left: 11px; gap: 10px; background: #f1f1f1; border: 1px solid #c4c4c4; border-top-color: #d6d6d6; color: #3a3a3a; font-size: 14.500px; letter-spacing: -.25px; }
.task { width: 49px; display: flex; align-items: center; justify-content: center; border-bottom: 2px solid transparent; padding-top: 2px; }
.task.open { background: linear-gradient(#83bdea, #83bdea) center bottom / 40px 2px no-repeat; border-bottom: 0; padding-bottom: 2px; }
.task.current { background: linear-gradient(#83bdea, #83bdea) center bottom / 48px 2px no-repeat, #35454e; }
.taskbar .task:nth-child(3) { width: 50px; padding-right: 2px; }
.tray { margin-left: auto; display: flex; align-items: center; gap: 11px; position: relative; left: 1px; }
.tray svg:nth-child(2) { margin-left: 2px; }
.tray svg:nth-child(3) { margin-left: -1px; }
.tray svg:nth-child(4) { margin-left: -3px; }
.clock { width: 72px; display: flex; flex-direction: column; align-items: center; padding-top: 2px; line-height: 18px; letter-spacing: -.4px; }
.notify { position: relative; width: 44px; display: flex; align-items: center; justify-content: center; padding-right: 12px; }
.badge { position: absolute; left: 15px; top: 19px; width: 16px; height: 16px; border: 1px solid #8a8a8a; border-radius: 50%; background: #2c3035; font-size: 11px; line-height: 14px; text-align: center; }
.peek-btn { width: 5px; border-left: 1px solid #4d5663; }
```
